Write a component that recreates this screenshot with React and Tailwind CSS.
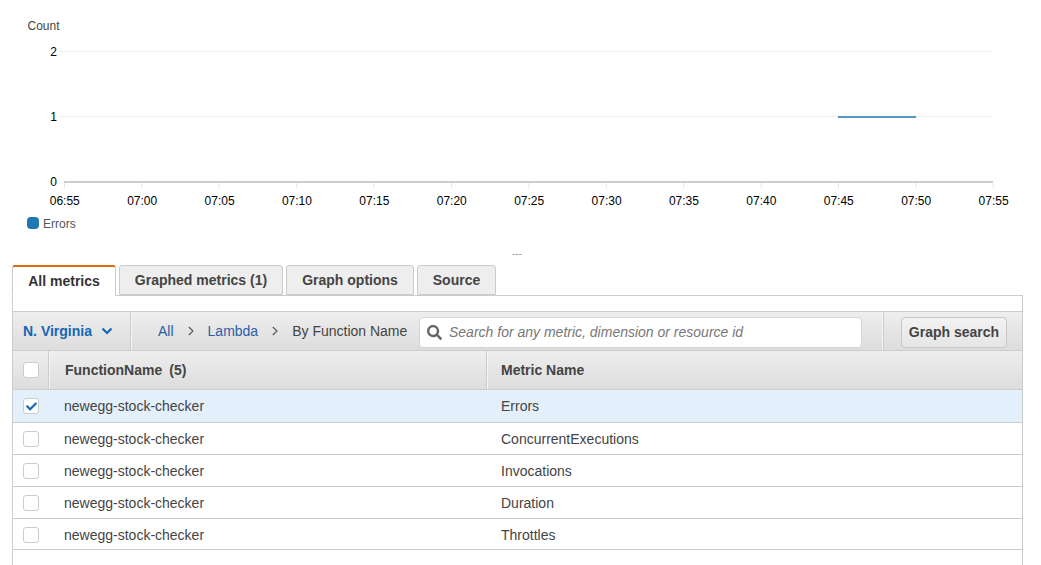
import React from "react";
import { FaSearch, FaCheck } from "react-icons/fa";

const ticks = ["06:55","07:00","07:05","07:10","07:15","07:20","07:25","07:30","07:35","07:40","07:45","07:50","07:55"];

const rows = [
  { metric: "Errors", checked: true },
  { metric: "ConcurrentExecutions" },
  { metric: "Invocations" },
  { metric: "Duration" },
  { metric: "Throttles", last: true },
];

const Chart = () => (
  <svg width="1041" height="260" className="block" style={{ fontFamily: '"Liberation Sans", Arial, sans-serif' }}>
    <text x="27.5" y="30" fontSize="12" fill="#444">Count</text>
    <line x1="60" x2="993" y1="51.5" y2="51.5" stroke="#eeeeee" />
    <line x1="60" x2="993" y1="116.5" y2="116.5" stroke="#eeeeee" />
    <text x="57" y="56" fontSize="12" fill="#000" textAnchor="end">2</text>
    <text x="57" y="121" fontSize="12" fill="#000" textAnchor="end">1</text>
    <text x="57" y="186" fontSize="12" fill="#000" textAnchor="end">0</text>
    <line x1="64" x2="993" y1="182" y2="182" stroke="#cccccc" strokeWidth="2" />
    {ticks.map((t, i) => {
      const x = 64.5 + i * 77.4;
      return (
        <g key={t}>
          <line x1={x} x2={x} y1="183" y2="188" stroke="#e6e6e6" />
          <text x={x + 0.25} y="205" fontSize="12" fill="#000" textAnchor="middle">{t}</text>
        </g>
      );
    })}
    <line x1="838" x2="916" y1="117" y2="117" stroke="#5596c4" strokeWidth="2" />
    <rect x="27" y="217" width="12" height="12" rx="4" fill="#1f77b4" />
    <text x="43" y="228" fontSize="12" fill="#555">Errors</text>
    <text x="517" y="257" fontSize="10" fill="#999" textAnchor="middle">---</text>
  </svg>
);

const Tab = ({ label, active, width }) => (
  <div
    className={
      active
        ? "h-[31px] -mb-px flex items-center justify-center bg-white border border-[#cccccc] border-b-white border-t-2 border-t-[#dd6b10] rounded-t-[3px] text-[14px] font-bold text-[#333] relative z-10"
        : "h-[30px] flex items-center justify-center bg-[#eeeeee] border border-[#cccccc] rounded-t-[3px] text-[14px] font-bold text-[#444]"
    }
    style={{ width }}
  >
    {label}
  </div>
);

const Checkbox = ({ checked }) => (
  <div className="w-[14px] h-[14px] box-content border border-[#cccccc] rounded-[3px] bg-white flex items-center justify-center shrink-0">
    {checked && <FaCheck className="text-[#1666b5] text-[11px]" />}
  </div>
);

const Chevron = ({ className }) => (
  <svg width="6" height="10" viewBox="0 0 6 10" fill="none" stroke="#555" strokeWidth="1.1" className={className}>
    <path d="M.8 1 5 5 .8 9" />
  </svg>
);

const App = () => {
  return (
    <div className="w-[1041px] h-[565px] overflow-hidden bg-white font-['Liberation_Sans',Arial,sans-serif] text-[14px] text-[#444]">
      <Chart />
      <div className="pl-[12px] pt-[5px]">
        <div className="flex gap-[3px] h-[30px] relative">
          <Tab label="All metrics" active width="104px" />
          <Tab label="Graphed metrics (1)" width="164px" />
          <Tab label="Graph options" width="128px" />
          <Tab label="Source" width="79px" />
        </div>
        <div className="w-[1011px] border border-[#cccccc] border-b-0">
          <div className="h-[15px] bg-white" />
          <div className="h-[39px] flex items-stretch border-t border-[#cccccc] bg-gradient-to-b from-[#eeeeee] to-[#dddddd]">
            <div className="w-[119px] flex items-center gap-[9px] pl-[10px] border-r border-[#f5f5f5] shadow-[inset_-1px_0_0_#cccccc] text-[#1666b5] font-bold">
              <span>N. Virginia</span>
              <svg width="12" height="8" viewBox="0 0 12 8" fill="none" stroke="#1666b5" strokeWidth="2.2">
                <path d="M1.5 1.5 6 6l4.5-4.5" />
              </svg>
            </div>
            <div className="flex items-center pl-[26px] w-[287px] shrink-0 text-[14px]">
              <span className="text-[#2a5ea8]">All</span>
              <Chevron className="mx-[14px]" />
              <span className="text-[#2a5ea8]">Lambda</span>
              <Chevron className="mx-[14px]" />
              <span className="text-[#444]">By Function Name</span>
            </div>
            <div className="w-[443px] h-[31px] mt-[5px] bg-white border border-[#d5d5d5] rounded-[4px] flex items-center pl-[7px] gap-[7px] shrink-0">
              <FaSearch className="text-[#666] text-[15px] shrink-0" />
              <span className="italic text-[#777] text-[14px]">Search for any metric, dimension or resource id</span>
            </div>
            <div className="ml-[20px] w-[140px] border-l border-[#f5f5f5] shadow-[inset_1px_0_0_#cccccc] flex items-start justify-end pr-[15px]">
              <div className="w-[106px] h-[31px] mt-[5px] pb-px border border-[#c8c8c8] rounded-[4px] bg-gradient-to-b from-[#f2f2f2] to-[#e6e6e6] flex items-center justify-center font-bold text-[#444]">
                Graph search
              </div>
            </div>
          </div>
          <div className="h-[40px] flex items-stretch border-t border-b border-[#cccccc] bg-gradient-to-b from-[#eeeeee] to-[#dddddd] font-bold text-[#444]">
            <div className="w-[37px] flex items-center pl-[10px] border-r border-[#f5f5f5] shadow-[inset_-1px_0_0_#cccccc] shrink-0">
              <Checkbox />
            </div>
            <div className="w-[438px] flex items-center pl-[15px] gap-[7px] border-r border-[#f5f5f5] shadow-[inset_-1px_0_0_#cccccc] shrink-0">
              FunctionName <span>(5)</span>
            </div>
            <div className="flex items-center pl-[13px]">Metric Name</div>
          </div>
          {rows.map((row) => (
            <div
              key={row.metric}
              className={
                (row.checked ? "bg-[#e3f0fc] h-[33px]" : row.last ? "bg-white h-[31px] pt-[2px]" : "bg-white h-[32px] pt-px") +
                " flex items-center border-b border-[#cccccc]"
              }
            >
              <div className="w-[36px] flex items-center justify-center shrink-0">
                <Checkbox checked={row.checked} />
              </div>
              <div className="w-[437px] pl-[15px] shrink-0">newegg-stock-checker</div>
              <div className="pl-[15px]">{row.metric}</div>
            </div>
          ))}
          <div className="h-[16px]" />
        </div>
      </div>
    </div>
  );
};

export default App;
